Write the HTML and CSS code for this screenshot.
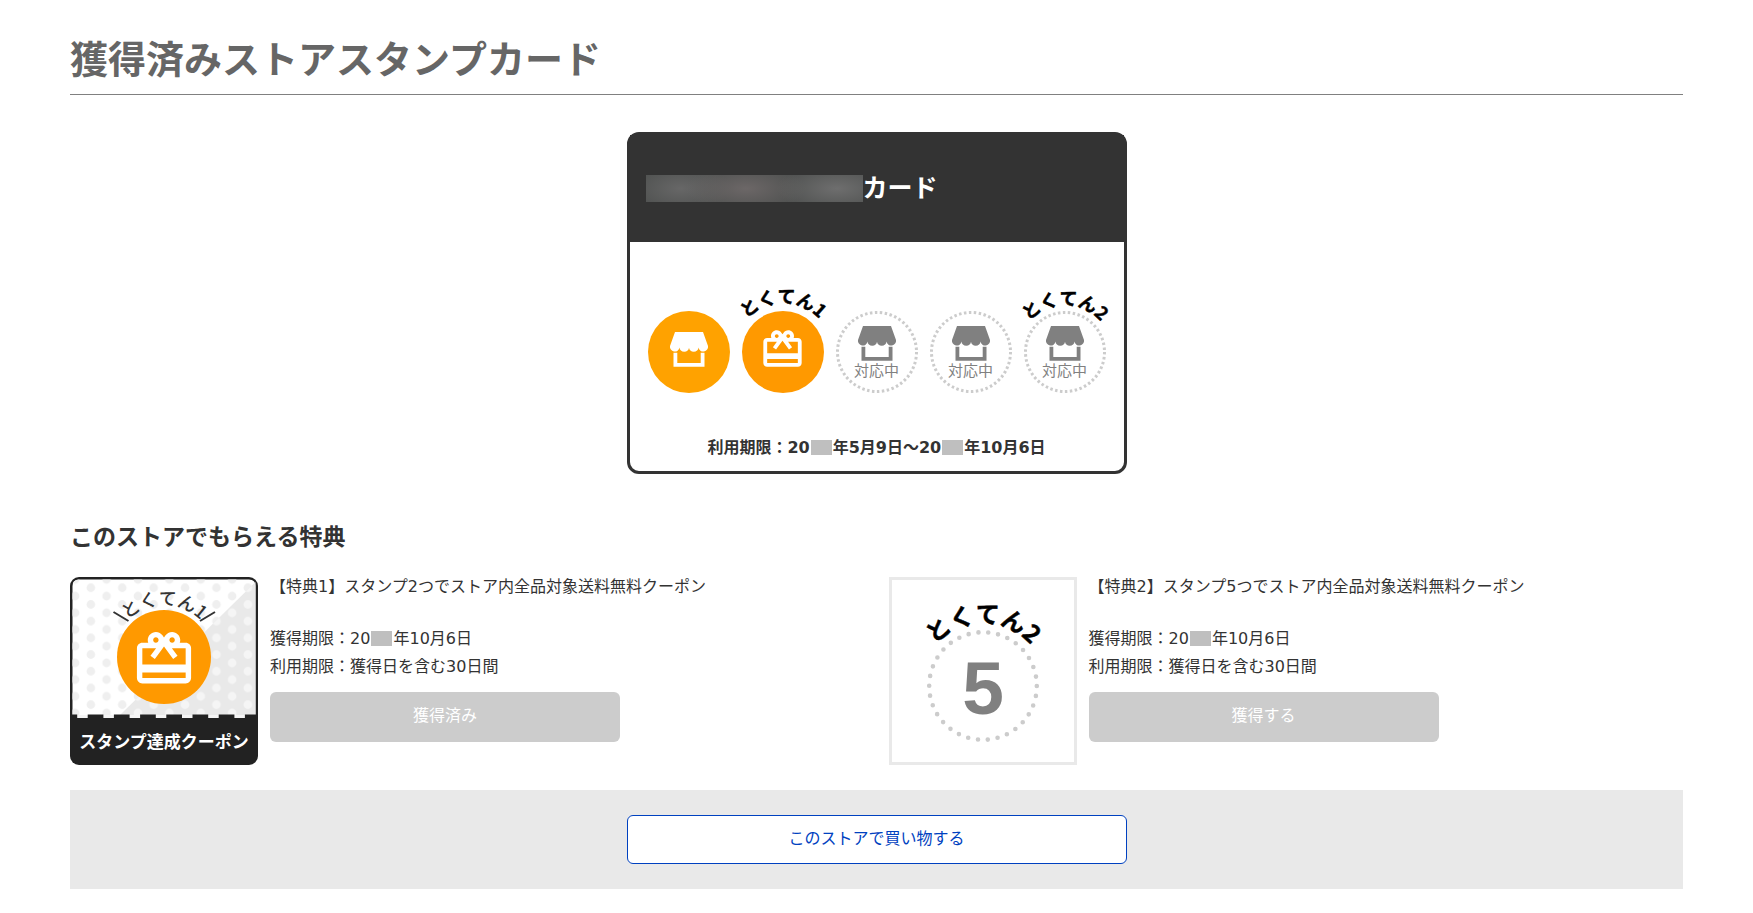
FILE: index.html
```
<!DOCTYPE html>
<html lang="ja">
<head>
<meta charset="utf-8">
<meta name="viewport" content="width=device-width, initial-scale=1">
<title>獲得済みストアスタンプカード</title>
<link rel="stylesheet" href="styles.css">
</head>
<body>
<svg class="defs" width="0" height="0" aria-hidden="true">
  <defs>
    <symbol id="roof" viewBox="0 0 38 35">
      <path d="M5 0H33L38 14A4.600 4.600 0 0 1 28.500 15.500A4.750 4.300 0 0 1 19 15.500A4.750 4.300 0 0 1 9.500 15.500A4.600 4.600 0 0 1 0 14Z"/>
      <path d="M3.500 20.800H7.300V31H30.700V20.800H34.500V34.700H3.500Z"/>
    </symbol>
    <symbol id="gift" viewBox="0 0 24 24">
      <path d="M20 6h-2.180c.11-.31.18-.65.18-1 0-1.660-1.340-3-3-3-1.050 0-1.960.54-2.500 1.350l-.5.67-.5-.68C10.960 2.540 10.050 2 9 2 7.340 2 6 3.340 6 5c0 .35.07.69.18 1H4c-1.110 0-1.990.89-1.990 2L2 19c0 1.110.89 2 2 2h16c1.110 0 2-.89 2-2V8c0-1.110-.89-2-2-2zm-5-2c.55 0 1 .45 1 1s-.45 1-1 1-1-.45-1-1 .45-1 1-1zM9 4c.55 0 1 .45 1 1s-.45 1-1 1-1-.45-1-1 .45-1 1-1zm11 15H4v-2h16v2zm0-5H4V8h5.080L7 10.830 8.620 12 11 8.760l1-1.360 1 1.360L15.380 12 17 10.830 14.920 8H20v6z"/>
    </symbol>
    <path id="stamp-arc" d="M-8 41A49 49 0 0 1 90 41"/>
    <path id="stamp-arc-low" d="M-6 41A47 47 0 0 1 88 41"/>
    <path id="coupon-arc" d="M42 80A52 52 0 0 1 146 80"/>
    <path id="reward-arc" d="M31 109A63 63 0 0 1 157 109"/>
    <clipPath id="shade"><path d="M185.500 5V138H50Z"/></clipPath>
    <pattern id="dots-light" width="31.400" height="16.700" patternUnits="userSpaceOnUse" x="13" y="2.400">
      <circle cx="7.850" cy="8.350" r="4.300"/><circle cx="23.550" cy="0" r="4.300"/><circle cx="23.550" cy="16.700" r="4.300"/>
    </pattern>
    <pattern id="dots-shade" width="31.400" height="16.700" patternUnits="userSpaceOnUse" x="13" y="2.400">
      <circle cx="7.850" cy="8.350" r="4.300"/><circle cx="23.550" cy="0" r="4.300"/><circle cx="23.550" cy="16.700" r="4.300"/>
    </pattern>
  </defs>
</svg>
<main class="page">
  <h1 class="page-title">獲得済みストアスタンプカード</h1>

  <section class="card">
    <h2 class="card-name"><span class="mask-name"></span>カード</h2>
    <ul class="stamps">
      <li class="stamp">
        <svg class="stamp-art" viewBox="0 0 82 82" aria-hidden="true">
          <circle class="disc-store" cx="41" cy="41" r="41"/>
          <use href="#roof" class="on" x="22" y="21" width="38" height="35"/>
        </svg>
      </li>
      <li class="stamp">
        <svg class="stamp-art" viewBox="0 0 82 82">
          <circle class="disc-gift" cx="41" cy="41" r="41"/>
          <use href="#gift" class="on" x="17.500" y="15.500" width="46" height="46"/>
          <text class="arc-text"><textPath href="#stamp-arc" startOffset="50%">とくてん1</textPath></text>
        </svg>
      </li>
      <li class="stamp">
        <svg class="stamp-art" viewBox="0 0 82 82" aria-hidden="true">
          <circle class="ring" cx="41" cy="41" r="39.500"/>
          <use href="#roof" class="off" x="22" y="15" width="38" height="35"/>
        </svg>
        <span class="stamp-state">対応中</span>
      </li>
      <li class="stamp">
        <svg class="stamp-art" viewBox="0 0 82 82" aria-hidden="true">
          <circle class="ring" cx="41" cy="41" r="39.500"/>
          <use href="#roof" class="off" x="22" y="15" width="38" height="35"/>
        </svg>
        <span class="stamp-state">対応中</span>
      </li>
      <li class="stamp">
        <svg class="stamp-art" viewBox="0 0 82 82">
          <circle class="ring" cx="41" cy="41" r="39.500"/>
          <use href="#roof" class="off" x="22" y="15" width="38" height="35"/>
          <text class="arc-text"><textPath href="#stamp-arc-low" startOffset="50%">とくてん2</textPath></text>
        </svg>
        <span class="stamp-state">対応中</span>
      </li>
    </ul>
    <p class="period">利用期限：20<span class="mask-year"></span>年5月9日～20<span class="mask-year"></span>年10月6日</p>
  </section>

  <h2 class="section-title">このストアでもらえる特典</h2>
  <div class="rewards">
    <article class="reward">
      <svg class="reward-art" viewBox="0 0 188 188">
        <rect class="coupon-base" width="188" height="188" rx="9"/>
        <path class="coupon-paper" d="M2.500 138V9Q2.500 2.500 9 2.500H179Q185.500 2.500 185.500 9V138Z"/>
        <path d="M2.500 138V9Q2.500 2.500 9 2.500H179Q185.500 2.500 185.500 9V138Z" fill="url(#dots-light)"/>
        <path class="coupon-shade" d="M185.500 5V138H50Z"/>
        <rect width="188" height="138" clip-path="url(#shade)" fill="url(#dots-shade)"/>
        <path class="coupon-edge" d="M2.500 139.500H185.500"/>
        <path class="coupon-teeth" d="M-8.500 139.500H186"/>
        <circle class="disc-gift" cx="94" cy="80" r="47"/>
        <use href="#gift" class="on" x="61.500" y="49.500" width="65" height="65"/>
        <path class="spark" d="M43.500 35L58.500 44M130 44L145 35"/>
        <text class="arc-text arc-coupon"><textPath href="#coupon-arc" startOffset="50%">とくてん1</textPath></text>
        <text class="coupon-caption" x="94" y="171">スタンプ達成クーポン</text>
      </svg>
      <div class="reward-body">
        <h3 class="reward-name">【特典1】スタンプ2つでストア内全品対象送料無料クーポン</h3>
        <p class="reward-line">獲得期限：20<span class="mask-year"></span>年10月6日</p>
        <p class="reward-line">利用期限：獲得日を含む30日間</p>
        <button class="claim" type="button" disabled>獲得済み</button>
      </div>
    </article>
    <article class="reward">
      <svg class="reward-art" viewBox="0 0 188 188">
        <rect class="reward-frame" x="1.500" y="1.500" width="185" height="185"/>
        <circle class="ring-large" cx="94" cy="109" r="53.800"/>
        <text class="arc-text arc-large"><textPath href="#reward-arc" startOffset="50%">とくてん2</textPath></text>
        <text class="count" x="94" y="137">5</text>
      </svg>
      <div class="reward-body">
        <h3 class="reward-name">【特典2】スタンプ5つでストア内全品対象送料無料クーポン</h3>
        <p class="reward-line">獲得期限：20<span class="mask-year"></span>年10月6日</p>
        <p class="reward-line">利用期限：獲得日を含む30日間</p>
        <button class="claim" type="button" disabled>獲得する</button>
      </div>
    </article>
  </div>

  <div class="shop-bar">
    <a class="shop-link" href="#">このストアで買い物する</a>
  </div>
</main>
</body>
</html>
```

FILE: styles.css
```
* { box-sizing: border-box; }
body {
  margin: 0;
  background: #fff;
  color: #333;
  font: 16px/28px "DejaVu Sans", "Noto Sans CJK JP", sans-serif;
}
h1, h2, h3, p, ul { margin: 0; padding: 0; }
.defs { display: block; }
#dots-light circle { fill: #efefef; }
#dots-shade circle { fill: #f5f5f5; }
.page { padding: 35px 4% 24px; }

.page-title {
  padding-bottom: 9px;
  border-bottom: 1px solid #808080;
  color: #666;
  font-size: 38px;
  line-height: 50px;
}

/* Stamp card */
.card {
  max-width: 500px;
  margin: 37px auto 0;
  border: 3px solid #333;
  border-radius: 12px;
}
.card-name {
  display: flex;
  align-items: center;
  height: 107px;
  padding: 0 16px;
  background: #333;
  color: #fff;
  font-size: 25px;
  line-height: 36px;
}
.mask-name {
  width: 217px;
  height: 27px;
  background:
    radial-gradient(ellipse 60px 24px at 88% 50%, #6e6e6e, transparent),
    radial-gradient(ellipse 60px 24px at 46% 50%, #6c6767, transparent),
    radial-gradient(ellipse 50px 24px at 16% 50%, #676767, transparent),
    #4f5150;
}
.stamps {
  display: flex;
  justify-content: center;
  gap: 12px;
  padding-top: 69px;
  list-style: none;
}
.stamp { position: relative; width: 82px; height: 82px; }
.stamp-art { display: block; width: 82px; height: 82px; overflow: visible; }
.stamp-state {
  position: absolute;
  top: 49px;
  left: 0;
  width: 100%;
  color: #808080;
  font-size: 15px;
  line-height: 22px;
  text-align: center;
}
.disc-store { fill: #ffa200; }
.disc-gift { fill: #ff9900; }
.on { fill: #fff; }
.off { fill: #808080; }
.ring { fill: none; stroke: #ccc; stroke-width: 3; stroke-dasharray: 2.5 2.464; }
.arc-text {
  fill: #000;
  stroke: #000;
  stroke-width: 0.5;
  stroke-linejoin: round;
  font: 700 18px "Noto Sans CJK JP", sans-serif;
  text-anchor: middle;
}
.period {
  padding: 41px 0 9px;
  font-weight: 700;
  text-align: center;
}
.mask-year {
  display: inline-block;
  width: 21px;
  height: 15px;
  margin: 0 1px;
  background: #bfbfbf;
  vertical-align: -2px;
}

/* Rewards */
.section-title {
  margin-top: 47px;
  font-size: 23px;
  line-height: 32px;
}
.rewards {
  display: grid;
  grid-template-columns: 1fr 1fr;
  gap: 24px;
  margin-top: 24px;
}
.reward { display: flex; gap: 12px; min-width: 0; }
.reward-art { flex: none; width: 188px; height: 188px; }
.reward-body { flex: 1; min-width: 0; }
.reward-name { margin: -4px 0 24px; font-size: 16px; font-weight: 400; }
.claim {
  display: block;
  width: 100%;
  max-width: 350px;
  height: 50px;
  margin-top: 11px;
  padding: 0 0 3px;
  border: 0;
  border-radius: 6px;
  background: #ccc;
  color: #fff;
  font: inherit;
}
.coupon-base { fill: #222; }
.coupon-paper { fill: #fff; }
.coupon-shade { fill: #e9e9e9; }
.coupon-edge { stroke: #f5f5f5; stroke-width: 3; }
.coupon-teeth { stroke: #222; stroke-width: 4; stroke-dasharray: 15.7 10.5; }
.spark { fill: none; stroke: #333; stroke-width: 2; }
.arc-coupon { fill: #333; stroke: none; font-weight: 500; }
.coupon-caption {
  fill: #fff;
  font: 700 17px "Noto Sans CJK JP", sans-serif;
  text-anchor: middle;
}
.reward-frame { fill: #fff; stroke: #e9e9e9; stroke-width: 3; }
.ring-large {
  fill: none;
  stroke: #ccc;
  stroke-width: 4.6;
  stroke-linecap: round;
  stroke-dasharray: 0 9.94;
}
.arc-large { font-size: 24px; }
.count {
  fill: #808080;
  font: 700 75px "Liberation Sans", sans-serif;
  text-anchor: middle;
}

/* Shop link */
.shop-bar {
  margin-top: 25px;
  padding: 25px;
  background: #e9e9e9;
}
.shop-link {
  display: block;
  max-width: 500px;
  margin: 0 auto;
  padding: 9px 0 10px;
  border: 1px solid #0041c0;
  border-radius: 6px;
  background: #fff;
  color: #0041c0;
  text-align: center;
  text-decoration: none;
}
```
